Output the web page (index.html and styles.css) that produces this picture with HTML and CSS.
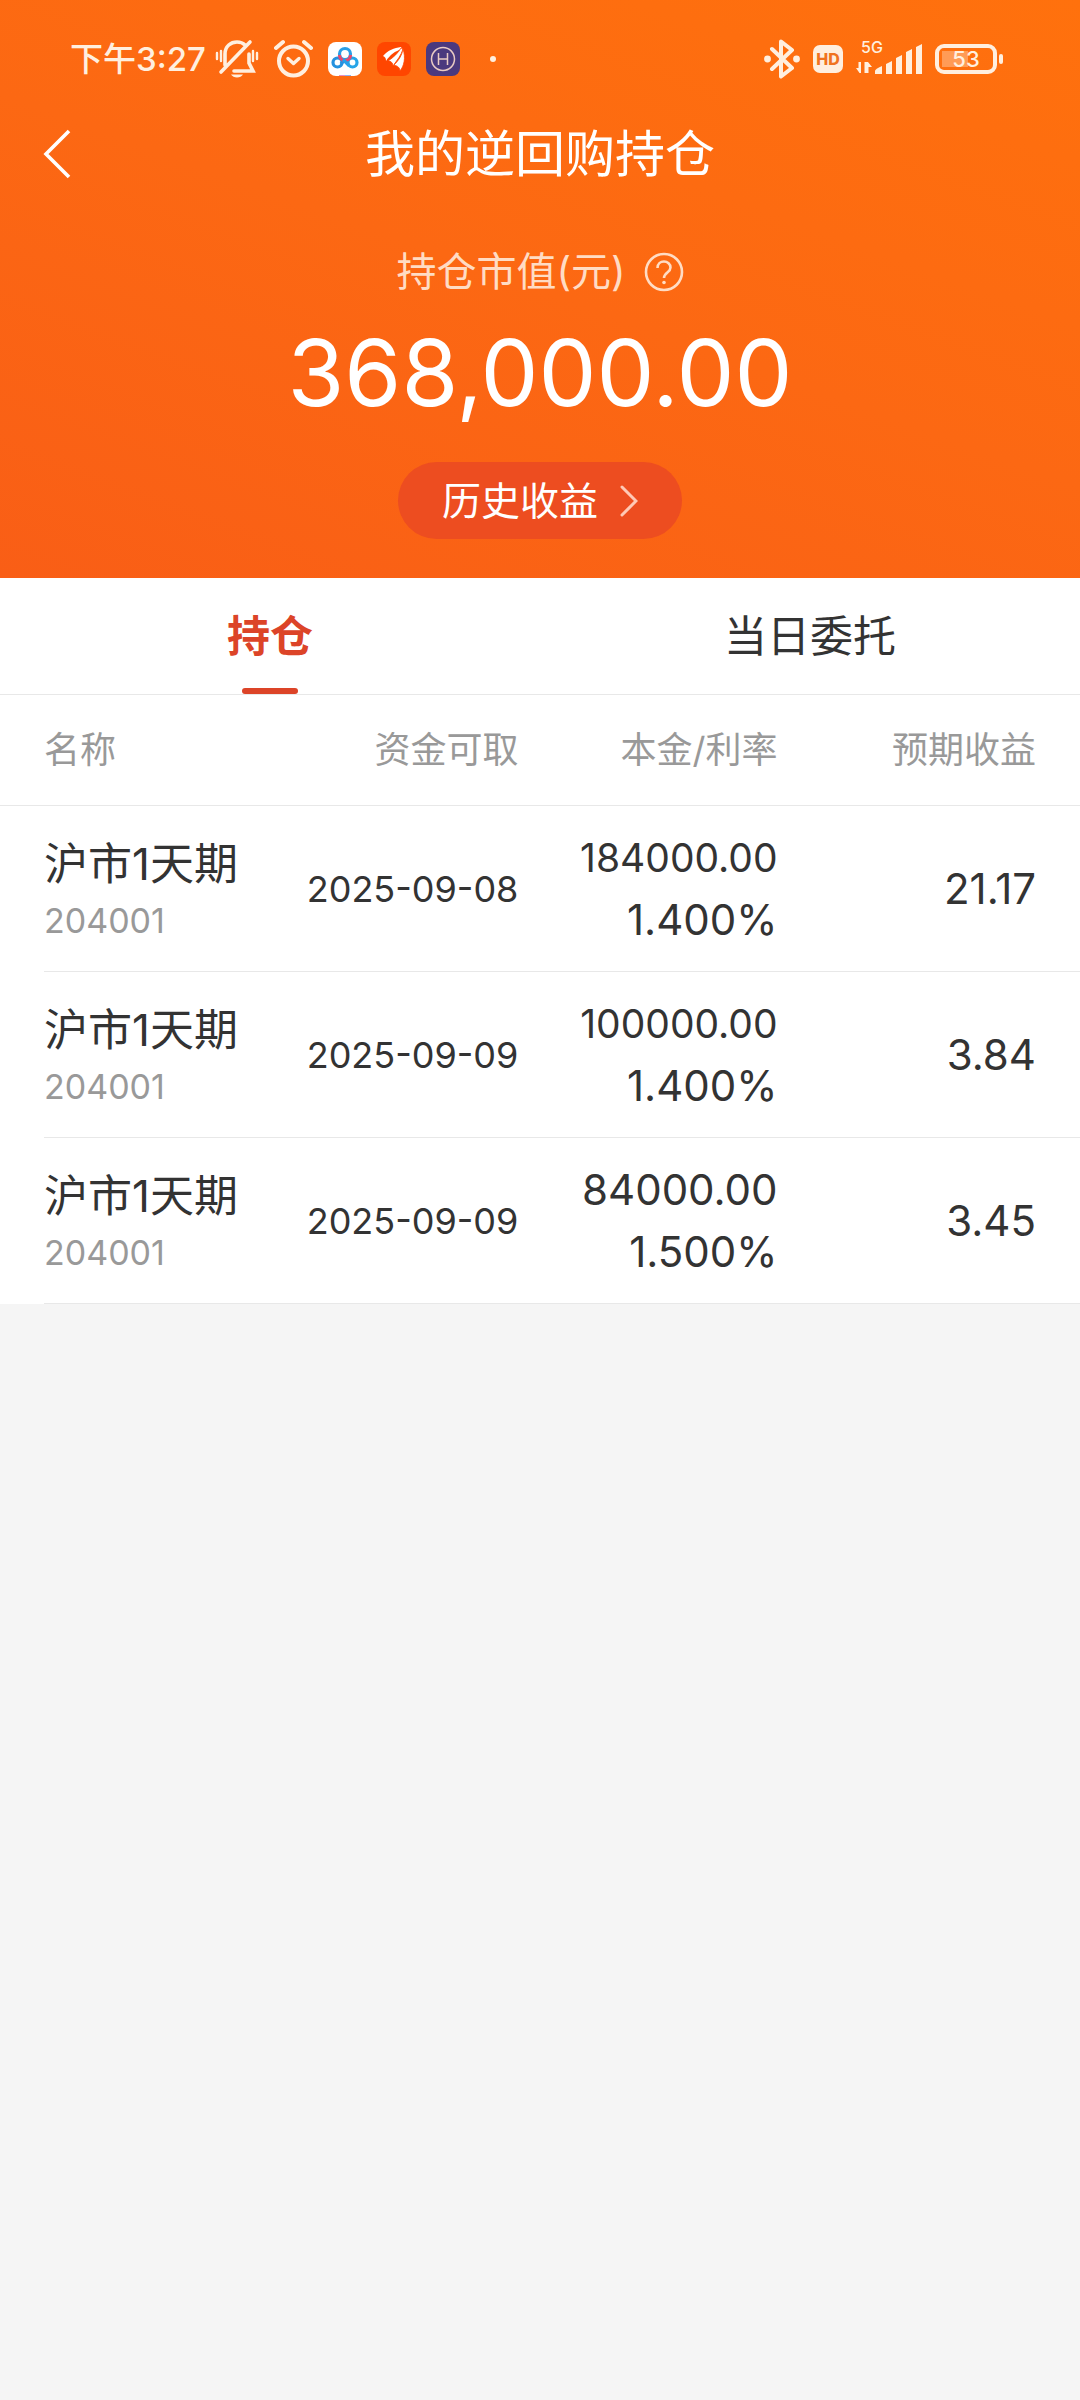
FILE: index.html
```html
<!DOCTYPE html>
<html lang="zh-CN">
<head>
<meta charset="utf-8">
<meta name="viewport" content="width=device-width, initial-scale=1">
<title>我的逆回购持仓</title>
<link rel="stylesheet" href="styles.css">
</head>
<body>
<header class="hero">
  <div class="status">
    <div class="status-left">
      <span class="time">下午3:27</span>
      <svg class="bell" width="44" height="40" viewBox="0 0 44 40" fill="none" stroke="currentColor" stroke-width="3.600" stroke-linecap="round" aria-hidden="true">
        <path d="M10 26V15C10 7 16 3 22 3c3 0 6 1 8 3M34 15v9l4 8H19M6 33L35 3"/>
        <path d="M2 14v6M6 12v10M38 12v10M42 14v6" stroke-width="2.400"/>
        <path d="M16 35.500h12q-2 3-6 3t-6-3z" fill="currentColor" stroke="none"/>
      </svg>
      <svg class="alarm" width="39" height="40" viewBox="0 0 39 40" fill="none" stroke="currentColor" stroke-linecap="round" aria-hidden="true">
        <circle cx="19.500" cy="22" r="14.500" stroke-width="4"/>
        <path d="M14 19.500l5.500 5 5.500-5" stroke-width="3.400" stroke-linejoin="round"/>
        <path d="M2 9l7-6M37 9l-7-6" stroke-width="4"/>
      </svg>
      <svg class="app" width="34" height="34" viewBox="0 0 34 34" fill="none" aria-hidden="true">
        <rect width="34" height="34" rx="8" fill="#fff"/>
        <path d="M17 17l-4 5" stroke="#2b7fe6" stroke-width="3.400"/>
        <circle cx="9.500" cy="20.500" r="4.500" stroke="#2492df" stroke-width="3.200"/>
        <circle cx="24.500" cy="20.500" r="4.500" stroke="#27a5e8" stroke-width="3.200"/>
        <circle cx="17" cy="12" r="5.500" stroke="#2a9fe6" stroke-width="3.200"/>
        <path d="M11.500 13a5.500 5.500 0 0 0 11 0" stroke="#e8486f" stroke-width="3.200"/>
        <path d="M15 17.500l6 6" stroke="#28a0e8" stroke-width="3.200"/>
        <path d="M11 33.500h6" stroke="#e88fc0"/><path d="M17 33.500h6" stroke="#8fb4f0"/>
      </svg>
      <svg class="app" width="34" height="34" viewBox="0 0 34 34" aria-hidden="true">
        <rect width="34" height="34" rx="8" fill="#ff4600"/>
        <path d="M6 14C11 8 17 6 24 5l1 2C18 9 13 13 9 19c0-3-1-4-3-5z" fill="#fff"/>
        <path d="M11 19C17 15 21 11 24 6l2 1C24 14 20 18 16 24c0-3-2-5-5-5z" fill="#fff" stroke="#ff4600" stroke-width=".8"/>
        <path d="M17 23C22 18 25 13 26 7c3 9 1 17-3 22 0-3-2-5-6-6z" fill="#fff" stroke="#ff4600" stroke-width=".8"/>
      </svg>
      <svg class="app" width="34" height="34" viewBox="0 0 34 34" fill="none" stroke="#e9cbc4" aria-hidden="true">
        <rect width="34" height="34" rx="8" fill="#4b397e" stroke="none"/>
        <circle cx="17" cy="17" r="11.500" stroke-width="1.500"/>
        <path d="M12.500 11v12M21.500 11v12M12.500 17h9" stroke-width="1.500"/>
      </svg>
      <span class="more"></span>
    </div>
    <div class="status-right">
      <svg width="36" height="40" viewBox="0 0 36 40" fill="none" stroke="currentColor" stroke-width="4" stroke-linejoin="round" stroke-linecap="round" aria-hidden="true">
        <path d="M8 10l20 19-11 8.500V2.500L28 11 8 30"/>
        <circle cx="3.500" cy="20" r="3.400" fill="currentColor" stroke="none"/>
        <circle cx="32.500" cy="20" r="3.400" fill="currentColor" stroke="none"/>
      </svg>
      <span class="hd">HD</span>
      <svg width="66" height="48" viewBox="0 -4 66 48" fill="currentColor" aria-hidden="true">
        <text x="5" y="14" class="net">5G</text>
        <path d="M5 23v11H3.500L0 29h2.500v-6zM8.500 23h3.500l4 5h-3.500v6H8.500z"/>
        <path d="M19 35v-3q0-2 7-5v8zM30 35V25l6-3v13zM40 35V19l6-3v19zM50 35V13l6-3v25zM60 35V8l6-3v30z"/>
      </svg>
      <span class="battery"><span class="cell">53</span><span class="cap"></span></span>
    </div>
  </div>
  <div class="titlebar">
    <button class="back" type="button" aria-label="返回">
      <svg width="28" height="50" viewBox="0 0 28 50" fill="none" stroke="currentColor" stroke-width="3.600" aria-hidden="true"><path d="M26 2L3 25l23 23"/></svg>
    </button>
    <h1 class="title">我的逆回购持仓</h1>
  </div>
  <div class="summary">
    <div class="label">
      <span>持仓市值(元)</span>
      <button class="help" type="button" aria-label="说明">
        <svg width="40" height="40" viewBox="0 0 40 40" fill="none" stroke="currentColor" stroke-width="2.600" aria-hidden="true">
          <circle cx="20" cy="20" r="18"/>
          <path d="M13.500 16c0-4 3-6.500 6.500-6.500s6.500 2.500 6.500 6c0 5-6.500 5-6.500 10.500"/>
          <circle cx="20" cy="30.500" r="1.800" fill="currentColor" stroke="none"/>
        </svg>
      </button>
    </div>
    <div class="total">368,000.00</div>
    <button class="history" type="button">历史收益
      <svg width="18" height="32" viewBox="0 0 18 32" fill="none" stroke="currentColor" stroke-width="3" stroke-linecap="round" aria-hidden="true"><path d="M2 2l14 14L2 30"/></svg>
    </button>
  </div>
</header>
<main class="panel">
  <nav class="tabs">
    <button class="tab active" type="button">持仓</button>
    <button class="tab" type="button">当日委托</button>
  </nav>
  <table class="holdings">
    <thead>
      <tr><th>名称</th><th>资金可取</th><th>本金/利率</th><th>预期收益</th></tr>
    </thead>
    <tbody>
      <tr>
        <td><div class="name">沪市1天期</div><div class="code">204001</div></td>
        <td class="date">2025-09-08</td>
        <td class="figure"><div class="compact">184000.00</div><div>1.400%</div></td>
        <td class="figure">21.17</td>
      </tr>
      <tr>
        <td><div class="name">沪市1天期</div><div class="code">204001</div></td>
        <td class="date">2025-09-09</td>
        <td class="figure"><div class="compact">100000.00</div><div>1.400%</div></td>
        <td class="figure">3.84</td>
      </tr>
      <tr>
        <td><div class="name">沪市1天期</div><div class="code">204001</div></td>
        <td class="date">2025-09-09</td>
        <td class="figure"><div>84000.00</div><div>1.500%</div></td>
        <td class="figure">3.45</td>
      </tr>
    </tbody>
  </table>
</main>
</body>
</html>
```
FILE: styles.css
```css
* { box-sizing: border-box; }

body {
  margin: 0;
  background: #f5f5f5;
  color: #333;
  font-family: Inter, "Noto Sans CJK SC", sans-serif;
}

button {
  padding: 0;
  border: 0;
  background: none;
  color: inherit;
  font: inherit;
}

svg { display: block; flex: none; }

.hero {
  padding-bottom: 39px;
  background: linear-gradient(20deg, #f95e16, #fc6813 50%, #ff710d);
  color: #fff;
}

.status {
  display: flex;
  justify-content: space-between;
  align-items: center;
  height: 118px;
  padding: 0 77px 0 70px;
  color: #ffefdf;
}

.status-left,
.status-right { display: flex; align-items: center; }
.status-left { gap: 15px; }
.status-right { gap: 13px; }

.time { font-size: 33px; font-weight: 500; line-height: 40px; }
.bell { margin-left: -6px; }

.more {
  width: 6px;
  height: 6px;
  margin-left: 15px;
  border-radius: 50%;
  background: currentColor;
}

.hd {
  width: 30px;
  border-radius: 7px;
  background: #ffefdf;
  color: #f0731f;
  font-size: 16px;
  font-weight: 800;
  line-height: 28px;
  text-align: center;
}

.net { font-size: 16px; font-weight: 500; }

.battery { display: flex; align-items: center; gap: 2px; }
.cell {
  width: 62px;
  border: 4px solid currentColor;
  border-radius: 9px;
  background: linear-gradient(#ff9b56, #ff9b56) 3px center / 26px 16px no-repeat;
  font-size: 22px;
  font-weight: 500;
  line-height: 22px;
  text-align: center;
}
.cap { width: 4px; height: 10px; border-radius: 2px; background: currentColor; }

.titlebar {
  display: grid;
  grid-template-columns: 1fr auto 1fr;
  align-items: center;
  height: 70px;
  padding: 0 43px;
}
.back { justify-self: start; }
.title { margin: 0; font-size: 50px; font-weight: 400; line-height: 72px; }

.summary {
  display: flex;
  flex-direction: column;
  align-items: center;
  padding-top: 54px;
}
.label {
  display: flex;
  align-items: center;
  gap: 18px;
  color: #ffdcc4;
  font-size: 40px;
  line-height: 60px;
}
.total { margin: 16px 0 34px; font-size: 92px; line-height: 110px; }

.history {
  display: flex;
  align-items: center;
  gap: 22px;
  padding: 0 44px;
  border-radius: 39px;
  background: #ed4d20;
  font-size: 39px;
  line-height: 77px;
}
.history svg { color: #ffc9b5; }

.panel { background: #fff; }

.tabs { display: flex; border-bottom: 1px solid #e8e8e8; }
.tab {
  flex: 1;
  position: relative;
  font-size: 43px;
  line-height: 116px;
}
.active { color: #dc4428; font-weight: 700; }
.active::after {
  content: "";
  position: absolute;
  bottom: 0;
  left: 50%;
  width: 56px;
  height: 6px;
  margin-left: -28px;
  border-radius: 3px;
  background: #dc4428;
}

.holdings {
  width: 100%;
  table-layout: fixed;
  border-collapse: separate;
  border-spacing: 0;
  text-align: right;
}
.holdings th,
.holdings td { padding: 0; }
.holdings th:nth-child(1) { width: 25%; }
.holdings th:nth-child(2) { width: 23%; }
.holdings th:nth-child(3) { width: 24%; }
.holdings th:first-child,
.holdings td:first-child { padding-left: 44px; text-align: left; }
.holdings th:last-child,
.holdings td:last-child { padding-right: 44px; }

.holdings th {
  border-bottom: 1px solid #e8e8e8;
  color: #999;
  font-size: 36px;
  font-weight: 400;
  line-height: 110px;
}
.holdings td { height: 166px; white-space: nowrap; }
.holdings tbody tr {
  background: linear-gradient(#e8e8e8, #e8e8e8) 44px bottom / 100% 1px no-repeat;
}

.name { font-size: 44px; line-height: 64px; }
.code { color: #999; font-size: 34px; line-height: 50px; }
.date { font-size: 36px; }
.figure { font-size: 42px; line-height: 62px; }
.compact { font-size: 39px; }
```
